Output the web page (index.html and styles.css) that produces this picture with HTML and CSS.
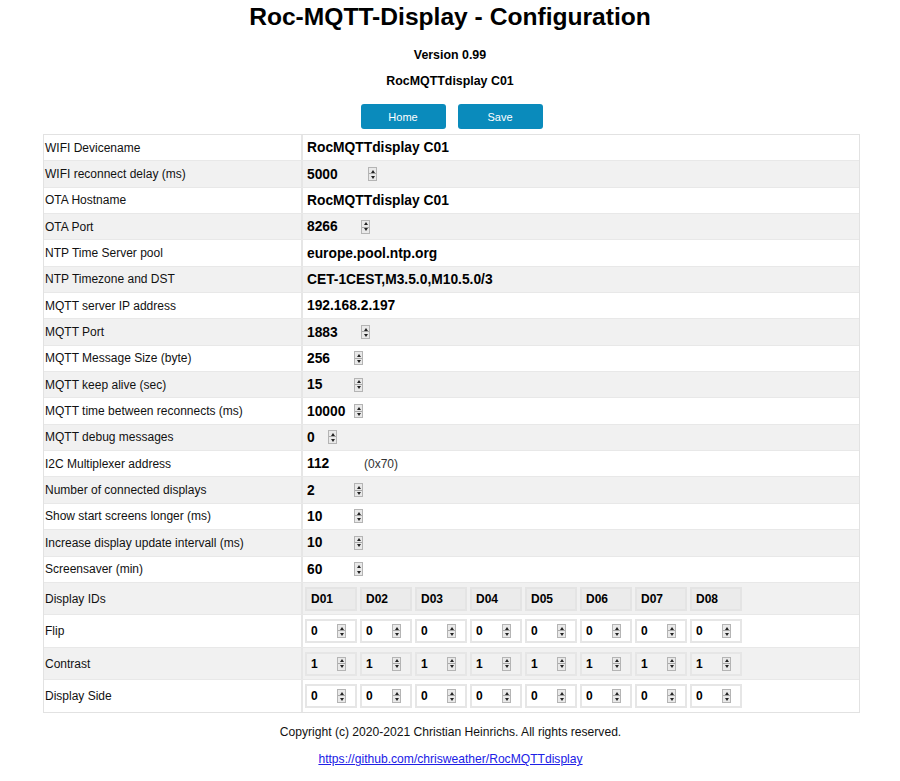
FILE: index.html
```html
<!DOCTYPE html>
<html lang="en">
<head>
<meta charset="utf-8">
<title>Roc-MQTT-Display - Configuration</title>
<link rel="stylesheet" href="styles.css">
</head>
<body>
<h1 class="title">Roc-MQTT-Display - Configuration</h1>
<p class="sub sub-version">Version 0.99</p>
<p class="sub sub-name">RocMQTTdisplay C01</p>
<div class="buttons">
  <button class="btn">Home</button>
  <button class="btn">Save</button>
</div>

<div class="config">
  <div class="row"><div class="label">WIFI Devicename</div><div class="value"><span class="txt">RocMQTTdisplay C01</span></div></div>
  <div class="row"><div class="label">WIFI reconnect delay (ms)</div><div class="value"><span class="num w61">5000</span><span class="spin"></span></div></div>
  <div class="row"><div class="label">OTA Hostname</div><div class="value"><span class="txt">RocMQTTdisplay C01</span></div></div>
  <div class="row"><div class="label">OTA Port</div><div class="value"><span class="num w54">8266</span><span class="spin"></span></div></div>
  <div class="row"><div class="label">NTP Time Server pool</div><div class="value"><span class="txt">europe.pool.ntp.org</span></div></div>
  <div class="row"><div class="label">NTP Timezone and DST</div><div class="value"><span class="txt">CET-1CEST,M3.5.0,M10.5.0/3</span></div></div>
  <div class="row"><div class="label">MQTT server IP address</div><div class="value"><span class="txt">192.168.2.197</span></div></div>
  <div class="row"><div class="label">MQTT Port</div><div class="value"><span class="num w54">1883</span><span class="spin"></span></div></div>
  <div class="row"><div class="label">MQTT Message Size (byte)</div><div class="value"><span class="num w47">256</span><span class="spin"></span></div></div>
  <div class="row"><div class="label">MQTT keep alive (sec)</div><div class="value"><span class="num w47">15</span><span class="spin"></span></div></div>
  <div class="row"><div class="label">MQTT time between reconnects (ms)</div><div class="value"><span class="num w47">10000</span><span class="spin"></span></div></div>
  <div class="row"><div class="label">MQTT debug messages</div><div class="value"><span class="num w21">0</span><span class="spin"></span></div></div>
  <div class="row"><div class="label">I2C Multiplexer address</div><div class="value"><span class="num w57">112</span><span class="hint">(0x70)</span></div></div>
  <div class="row"><div class="label">Number of connected displays</div><div class="value"><span class="num w47">2</span><span class="spin"></span></div></div>
  <div class="row"><div class="label">Show start screens longer (ms)</div><div class="value"><span class="num w47">10</span><span class="spin"></span></div></div>
  <div class="row"><div class="label">Increase display update intervall (ms)</div><div class="value"><span class="num w47">10</span><span class="spin"></span></div></div>
  <div class="row"><div class="label">Screensaver (min)</div><div class="value"><span class="num w47">60</span><span class="spin"></span></div></div>

  <div class="row row-tall"><div class="label">Display IDs</div>
    <div class="value cells">
      <span class="cell head">D01</span><span class="cell head">D02</span><span class="cell head">D03</span><span class="cell head">D04</span>
      <span class="cell head">D05</span><span class="cell head">D06</span><span class="cell head">D07</span><span class="cell head">D08</span>
    </div>
  </div>
  <div class="row row-tall"><div class="label">Flip</div>
    <div class="value cells">
      <span class="cell"><span class="cv">0</span><span class="spin"></span></span><span class="cell"><span class="cv">0</span><span class="spin"></span></span>
      <span class="cell"><span class="cv">0</span><span class="spin"></span></span><span class="cell"><span class="cv">0</span><span class="spin"></span></span>
      <span class="cell"><span class="cv">0</span><span class="spin"></span></span><span class="cell"><span class="cv">0</span><span class="spin"></span></span>
      <span class="cell"><span class="cv">0</span><span class="spin"></span></span><span class="cell"><span class="cv">0</span><span class="spin"></span></span>
    </div>
  </div>
  <div class="row row-tall"><div class="label">Contrast</div>
    <div class="value cells">
      <span class="cell"><span class="cv">1</span><span class="spin"></span></span><span class="cell"><span class="cv">1</span><span class="spin"></span></span>
      <span class="cell"><span class="cv">1</span><span class="spin"></span></span><span class="cell"><span class="cv">1</span><span class="spin"></span></span>
      <span class="cell"><span class="cv">1</span><span class="spin"></span></span><span class="cell"><span class="cv">1</span><span class="spin"></span></span>
      <span class="cell"><span class="cv">1</span><span class="spin"></span></span><span class="cell"><span class="cv">1</span><span class="spin"></span></span>
    </div>
  </div>
  <div class="row row-tall"><div class="label">Display Side</div>
    <div class="value cells">
      <span class="cell"><span class="cv">0</span><span class="spin"></span></span><span class="cell"><span class="cv">0</span><span class="spin"></span></span>
      <span class="cell"><span class="cv">0</span><span class="spin"></span></span><span class="cell"><span class="cv">0</span><span class="spin"></span></span>
      <span class="cell"><span class="cv">0</span><span class="spin"></span></span><span class="cell"><span class="cv">0</span><span class="spin"></span></span>
      <span class="cell"><span class="cv">0</span><span class="spin"></span></span><span class="cell"><span class="cv">0</span><span class="spin"></span></span>
    </div>
  </div>
</div>

<footer class="footer">
  <p class="copy">Copyright (c) 2020-2021 Christian Heinrichs. All rights reserved.</p>
  <p class="link-line"><a href="#" class="link">https://github.com/chrisweather/RocMQTTdisplay</a></p>
</footer>
</body>
</html>
```

FILE: styles.css
```css
html, body {
  margin: 0;
  padding: 0;
  background: #ffffff;
}
body {
  font-family: "Liberation Sans", Arial, sans-serif;
  color: #000;
}
.title {
  margin: 3px 0 0;
  font-size: 24.6px;
  line-height: 28px;
  font-weight: bold;
  text-align: center;
}
.sub {
  margin: 0;
  font-size: 12.4px;
  line-height: 15px;
  font-weight: bold;
  text-align: center;
}
.sub-version { margin-top: 16.5px; }
.sub-name { margin-top: 11px; }
.buttons {
  display: flex;
  justify-content: center;
  gap: 12px;
  margin-top: 15.5px;
  padding-left: 3px;
}
.btn {
  width: 85px;
  height: 25px;
  border: none;
  border-radius: 3px;
  background: #0a8bbc;
  color: #fff;
  font-family: "Liberation Sans", Arial, sans-serif;
  font-size: 11px;
  padding: 0;
}
.config {
  margin: 5px 0 0 43px;
  width: 817px;
  box-sizing: border-box;
  border: 1px solid #e2e2e2;
}
.row {
  display: grid;
  grid-template-columns: 259px 1fr;
  height: 26.35px;
  box-sizing: border-box;
  border-top: 1px solid #e8e8e8;
}
.row:first-child { border-top: none; height: 25.35px; }
.row:nth-child(even) { background: #f1f1f1; }
.row-tall { height: 32.5px; }
.label {
  display: flex;
  align-items: center;
  padding-left: 1px;
  font-size: 12px;
  color: #111;
  border-right: 2px solid #e6e6e6;
}
.value {
  display: flex;
  align-items: center;
  padding-left: 4px;
  font-size: 13.8px;
  font-weight: bold;
}
.txt { white-space: nowrap; }
.num { display: inline-block; }
.w61 { width: 61px; }
.w54 { width: 54px; }
.w47 { width: 47px; }
.w57 { width: 57px; }
.w21 { width: 21px; }
.hint {
  font-size: 12px;
  font-weight: normal;
  color: #333;
}
.spin {
  display: inline-block;
  position: relative;
  width: 9px;
  height: 14px;
  box-sizing: border-box;
  border: 1px solid #b4b4b4;
  background: linear-gradient(#e9e9e9 0 5.5px, #a8a8a8 5.5px 6.5px, #e9e9e9 6.5px);
}
.spin::before,
.spin::after {
  content: "";
  position: absolute;
  left: 1.5px;
  border-left: 2.5px solid transparent;
  border-right: 2.5px solid transparent;
}
.spin::before {
  top: 1.5px;
  border-bottom: 3px solid #222;
}
.spin::after {
  bottom: 1.5px;
  border-top: 3px solid #222;
}
.cells {
  padding-left: 2px;
  gap: 3px;
}
.cell {
  display: flex;
  align-items: center;
  width: 52px;
  height: 24px;
  box-sizing: border-box;
  border: 2px solid #e6e6e6;
  padding-left: 4px;
  font-size: 12px;
  font-weight: bold;
}
.cell.head {
  background: #ebebeb;
  border-color: #e4e4e4;
}
.cv {
  display: inline-block;
  width: 26px;
}
.footer {
  text-align: center;
  font-size: 12.1px;
  padding-left: 1px;
}
.copy {
  margin: 12.5px 0 0;
  line-height: 15px;
  color: #111;
}
.link-line {
  margin: 12px 0 0;
  line-height: 15px;
}
.link {
  color: #2020e6;
  text-decoration: underline;
}
```
